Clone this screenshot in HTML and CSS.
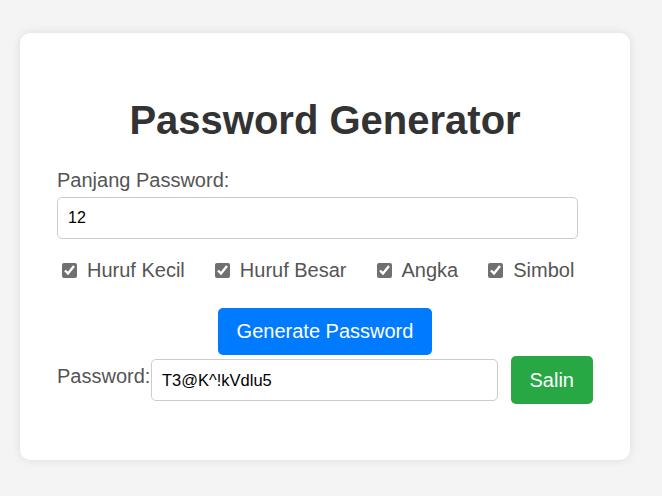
FILE: index.html
```html
<!DOCTYPE html>
<html lang="id">
<head>
<meta charset="utf-8">
<title>Password Generator</title>
<link rel="stylesheet" href="styles.css">
</head>
<body>
<div class="card">
  <h1 class="title">Password Generator</h1>
  <label class="field-label" for="length">Panjang Password:</label>
  <input class="text-input length-input" id="length" type="number" value="12">
  <div class="options">
    <label class="opt"><input type="checkbox" checked><span>Huruf Kecil</span></label>
    <label class="opt"><input type="checkbox" checked><span>Huruf Besar</span></label>
    <label class="opt"><input type="checkbox" checked><span>Angka</span></label>
    <label class="opt"><input type="checkbox" checked><span>Simbol</span></label>
  </div>
  <div class="gen-wrap">
    <button class="btn btn-blue" type="button">Generate Password</button>
  </div>
  <div class="result-row">
    <label class="field-label row-label" for="pw">Password:</label>
    <input class="text-input pw-input" id="pw" type="text" value="T3@K^!kVdlu5" readonly>
    <button class="btn btn-green" type="button">Salin</button>
  </div>
</div>
</body>
</html>
```

FILE: styles.css
```css
html, body {
  margin: 0;
  padding: 0;
}
body {
  background: #f4f4f4;
  font-family: "Liberation Sans", Arial, sans-serif;
  padding: 33px 20px;
}
.card {
  width: 610px;
  box-sizing: border-box;
  background: #fff;
  border-radius: 10px;
  box-shadow: 0 0 10px rgba(0, 0, 0, 0.1);
  padding: 37px 37px 56px 37px;
}
.title {
  margin: 27px 0 26px;
  font-size: 40px;
  line-height: 46px;
  font-weight: bold;
  color: #333;
  text-align: center;
}
.field-label {
  display: block;
  font-size: 20px;
  line-height: 23px;
  color: #555;
  margin-bottom: 5px;
}
.text-input {
  box-sizing: border-box;
  height: 42px;
  padding: 0 10px;
  border: 1px solid #ccc;
  border-radius: 5px;
  font-family: "Liberation Sans", Arial, sans-serif;
  font-size: 16px;
  color: #000;
  background: #fff;
  outline: none;
  margin: 0;
}
.length-input {
  display: block;
  width: 521px;
  -moz-appearance: textfield;
}
.length-input::-webkit-inner-spin-button,
.length-input::-webkit-outer-spin-button {
  -webkit-appearance: none;
  margin: 0;
}
.options {
  display: flex;
  align-items: center;
  gap: 25px;
  height: 23px;
  margin-top: 20px;
}
.opt {
  display: flex;
  align-items: center;
  font-size: 20px;
  line-height: 23px;
  color: #555;
}
.opt input {
  width: 15px;
  height: 15px;
  margin: 0 10px 0 5px;
  accent-color: #707070;
}
.gen-wrap {
  display: flex;
  justify-content: center;
  margin-top: 26px;
}
.btn {
  border: none;
  border-radius: 5px;
  color: #fff;
  font-family: "Liberation Sans", Arial, sans-serif;
  font-size: 20px;
  padding: 0 19px;
  cursor: pointer;
}
.btn-blue {
  background: #007bff;
  height: 47px;
}
.btn-green {
  background: #28a745;
  height: 48px;
  margin-left: 13px;
}
.result-row {
  display: flex;
  align-items: center;
  margin-top: 1px;
  height: 48px;
}
.row-label {
  width: 94px;
  flex: none;
  margin-bottom: 8px;
}
.pw-input {
  flex: 1;
  min-width: 0;
  font-size: 16.5px;
}
```
